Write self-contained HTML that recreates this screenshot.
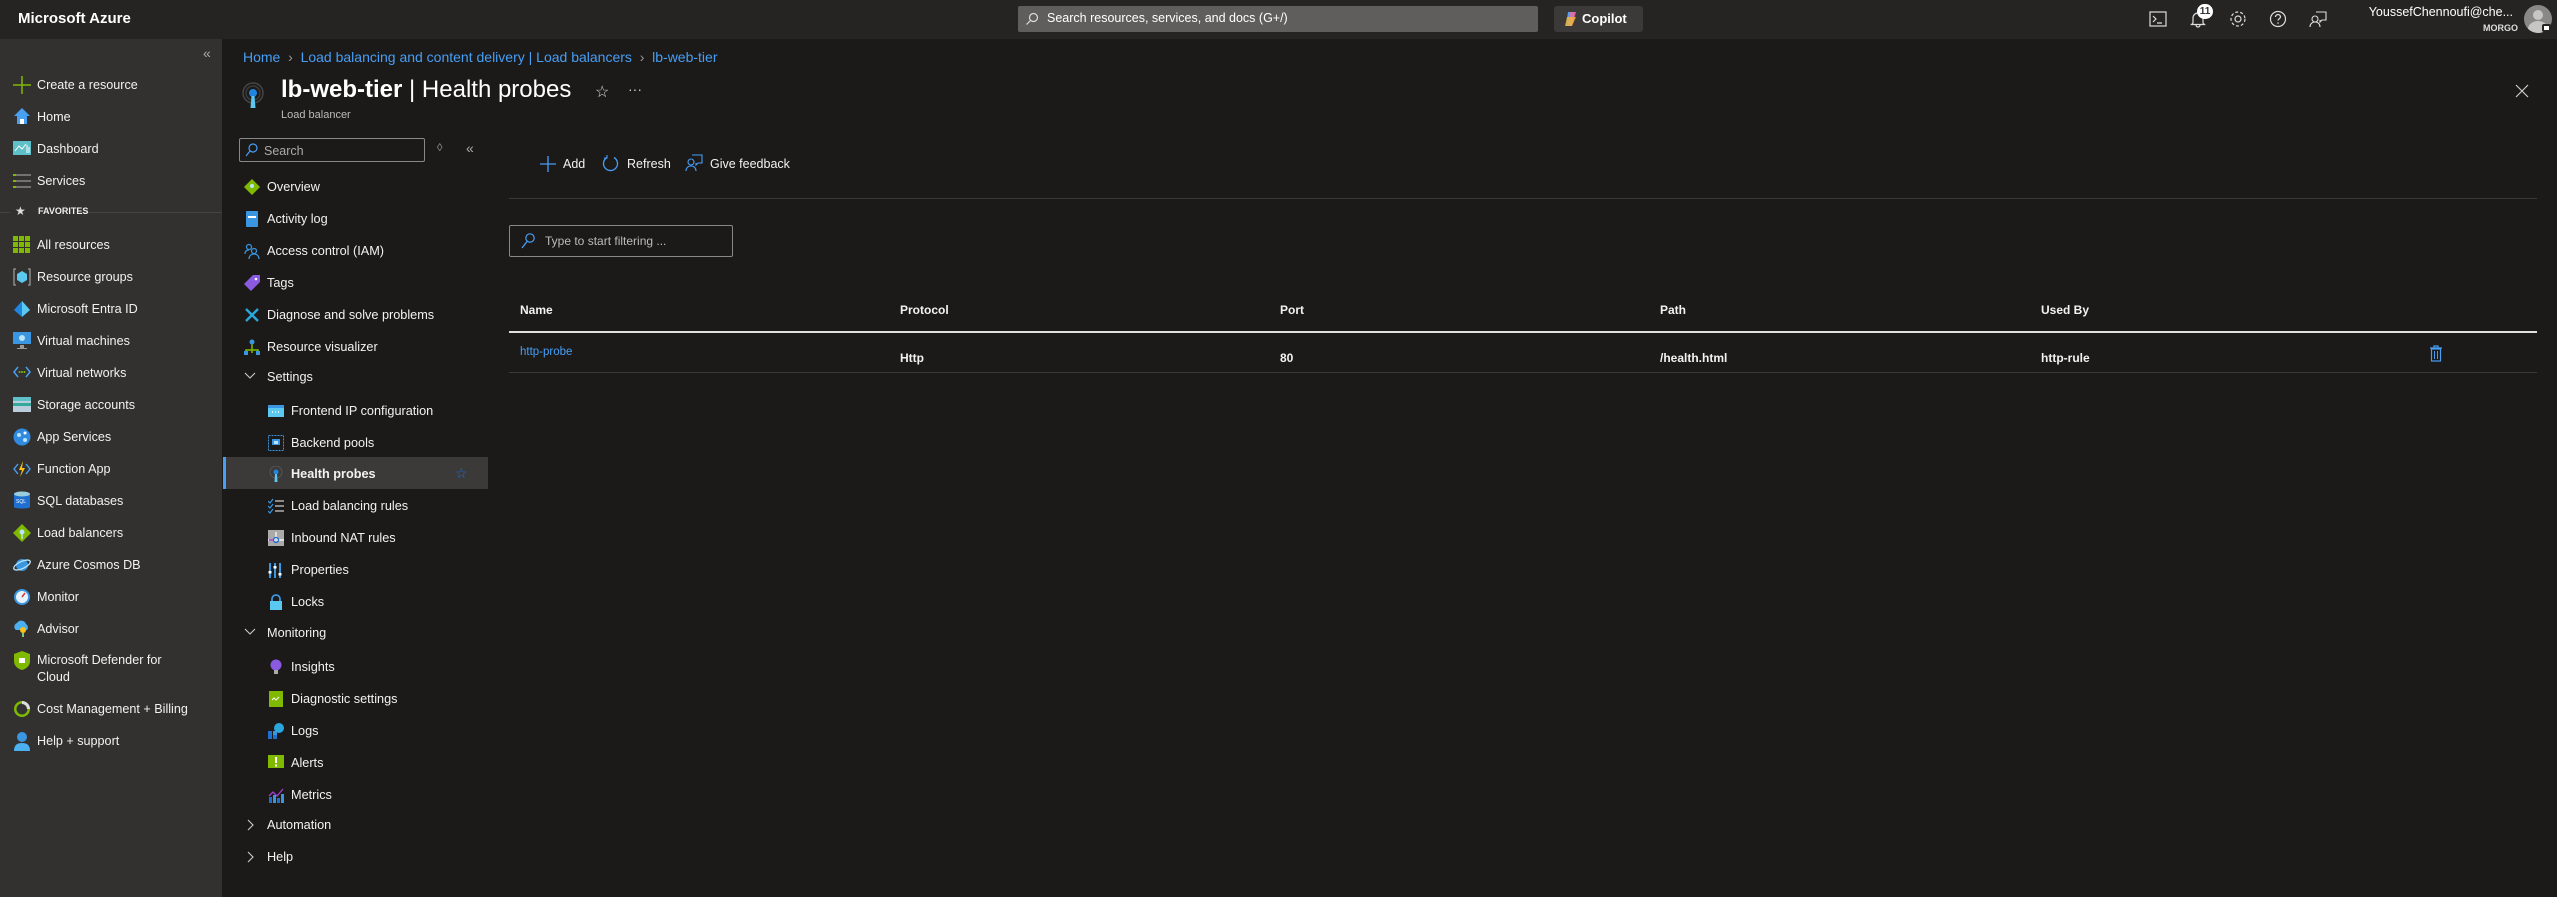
<!DOCTYPE html>
<html><head><meta charset="utf-8"><style>
*{box-sizing:border-box;margin:0;padding:0}
body{width:2557px;height:897px;background:#1b1a19;font-family:"Liberation Sans",sans-serif;color:#f3f2f1;position:relative;overflow:hidden;font-size:13px}
.a{position:absolute;white-space:nowrap}
#top{left:0;top:0;width:2557px;height:39px;background:#252423}
#side{left:0;top:39px;width:222px;height:858px;background:#323130}
.st{position:absolute;left:37px;font-size:12.6px;color:#f3f2f1;line-height:16px}
.mi{position:absolute;left:244px;width:16px;height:16px}
.mt{position:absolute;left:267px;font-size:12.7px;line-height:16px}
.si2{position:absolute;left:268px;width:16px;height:16px}
.mt2{position:absolute;left:291px;font-size:12.7px;line-height:16px}
.th{position:absolute;top:303px;font-size:12px;font-weight:bold;color:#f3f2f1}
.td{position:absolute;top:351px;font-size:12px;font-weight:bold;color:#f3f2f1}
</style></head><body>
<div class="a" id="top"></div>
<div class="a" style="left:18px;top:10px;font-size:15px;font-weight:bold;color:#fff">Microsoft Azure</div>
<div class="a" style="left:1018px;top:6px;width:520px;height:26px;background:#5f5e5c;border-radius:2px"></div>
<svg class="a" style="left:1025px;top:12px" width="14" height="14" viewBox="0 0 14 14"><circle cx="8.5" cy="5.5" r="4" fill="none" stroke="#ddd" stroke-width="1.2"/><path d="M5.5 8.5L1.5 12.5" stroke="#ddd" stroke-width="1.2"/></svg>
<div class="a" style="left:1047px;top:11px;font-size:12.5px;color:#fff">Search resources, services, and docs (G+/)</div>
<div class="a" style="left:1554px;top:6px;width:89px;height:26px;background:#3b3a39;border-radius:3px"></div>
<svg class="a" style="left:1564px;top:11px" width="14" height="16" viewBox="0 0 14 16"><path d="M4 1h6l-2 14H2z" fill="#4aa3f5"/><path d="M6 1h6l-4 14H5z" fill="#e56ea8" opacity=".9"/><path d="M3 6h9l-4 9H1z" fill="#f2b53a" opacity=".8"/></svg>
<div class="a" style="left:1582px;top:11px;font-size:13px;font-weight:bold;color:#fff">Copilot</div>
<svg class="a" style="left:2149px;top:11px" width="18" height="16" viewBox="0 0 18 16"><rect x="1" y="1" width="16" height="14" fill="none" stroke="#ddd" stroke-width="1.2"/><path d="M4 5l3 3-3 3M8 12h5" stroke="#ddd" fill="none" stroke-width="1.2"/></svg>
<svg class="a" style="left:2190px;top:10px" width="16" height="18" viewBox="0 0 16 18"><path d="M3 13V8a5 5 0 0110 0v5l1.5 1.5h-13z M6 15a2 2 0 004 0" fill="none" stroke="#ddd" stroke-width="1.2"/></svg>
<div class="a" style="left:2197px;top:4px;width:16px;height:15px;border-radius:8px;background:#fff;color:#333;font-size:10px;font-weight:bold;text-align:center;line-height:15px">11</div>
<svg class="a" style="left:2229px;top:10px" width="18" height="18" viewBox="0 0 18 18"><circle cx="9" cy="9" r="3" fill="none" stroke="#ddd" stroke-width="1.2"/><circle cx="9" cy="9" r="7" fill="none" stroke="#ddd" stroke-width="1.2" stroke-dasharray="3 2"/></svg>
<svg class="a" style="left:2269px;top:10px" width="18" height="18" viewBox="0 0 18 18"><circle cx="9" cy="9" r="7.5" fill="none" stroke="#ddd" stroke-width="1.2"/><path d="M6.5 7a2.5 2.5 0 115 0c0 1.5-2.5 2-2.5 3.5" fill="none" stroke="#ddd" stroke-width="1.2"/><circle cx="9" cy="13" r=".8" fill="#ddd"/></svg>
<svg class="a" style="left:2309px;top:10px" width="18" height="18" viewBox="0 0 18 18"><path d="M7 2h10v8h-4l-2 2v-2" fill="none" stroke="#ddd" stroke-width="1.1"/><circle cx="6" cy="9" r="3" fill="none" stroke="#ddd" stroke-width="1.1"/><path d="M1 17c0-3 2-5 5-5s5 2 5 5" fill="none" stroke="#ddd" stroke-width="1.1"/></svg>
<div class="a" style="right:44px;top:5px;font-size:12.5px;color:#fff">YoussefChennoufi@che...</div>
<div class="a" style="right:39px;top:23px;font-size:9px;font-weight:bold;color:#ddd">MORGO</div>
<div class="a" style="left:2524px;top:5px;width:28px;height:28px;border-radius:50%;background:#8a8886;overflow:hidden"><div style="position:absolute;left:9px;top:5px;width:10px;height:10px;border-radius:50%;background:#c8c6c4"></div><div style="position:absolute;left:4px;top:16px;width:20px;height:16px;border-radius:50%;background:#c8c6c4"></div></div>
<div class="a" style="left:2542px;top:24px;width:9px;height:8px;background:#fff;border-radius:2px;border:2px solid #252423"></div>

<div class="a" id="side"></div>
<div class="a" style="left:203px;top:45px;font-size:14px;color:#aaa">«</div>
<svg class="a" style="left:13px;top:76px" width="18" height="18"><path d="M9 0v18M0 9h18" stroke="#7fba00" stroke-width="1.5"/></svg><div class="a st" style="top:77px">Create a resource</div>
<svg class="a" style="left:13px;top:107px" width="18" height="18"><path d="M9 1L1 9h3v8h10V9h3z" fill="#4aa0f0"/><rect x="7" y="12" width="4" height="5" fill="#fff"/></svg><div class="a st" style="top:109px">Home</div>
<svg class="a" style="left:13px;top:141px" width="18" height="16"><rect width="18" height="14" fill="#5ec0c8"/><path d="M2 10l4-5 3 3 4-5M14 4v8M16 6v6" stroke="#fff" fill="none"/></svg><div class="a st" style="top:141px">Dashboard</div>
<svg class="a" style="left:13px;top:173px" width="18" height="16"><path d="M0 2h18M0 8h18M0 14h18" stroke="#999" stroke-width="1.2"/><path d="M0 2h3M0 8h3M0 14h3" stroke="#7fba00" stroke-width="2"/></svg><div class="a st" style="top:173px">Services</div>
<div class="a" style="left:0;top:212px;width:222px;height:1px;background:#444"></div>
<div class="a" style="left:10px;top:205px;width:70px;height:14px;background:#323130"></div>
<div class="a" style="left:15px;top:204px;font-size:12px;color:#ddd">★</div>
<div class="a" style="left:38px;top:206px;font-size:9px;font-weight:bold;color:#eee">FAVORITES</div>
<svg class="a" style="left:13px;top:236px" width="17" height="17"><g fill="#7fba00"><rect width="5" height="5"/><rect x="6" width="5" height="5"/><rect x="12" width="5" height="5"/><rect y="6" width="5" height="5"/><rect x="6" y="6" width="5" height="5"/><rect x="12" y="6" width="5" height="5"/><rect y="12" width="5" height="5"/><rect x="6" y="12" width="5" height="5"/><rect x="12" y="12" width="5" height="5"/></g></svg><div class="a st" style="top:237px">All resources</div>
<svg class="a" style="left:13px;top:268px" width="18" height="18"><path d="M3 1H1v16h2M15 1h2v16h-2" stroke="#999" fill="none" stroke-width="1.3"/><path d="M9 3l5 3v6l-5 3-5-3V6z" fill="#5ac8f0"/></svg><div class="a st" style="top:269px">Resource groups</div>
<svg class="a" style="left:13px;top:300px" width="18" height="18"><path d="M9 1L1 10l8 7 8-7z" fill="#1f85de"/><path d="M9 1l8 9-8 7z" fill="#5ac8f0"/></svg><div class="a st" style="top:301px">Microsoft Entra ID</div>
<svg class="a" style="left:13px;top:332px" width="18" height="18"><rect width="18" height="12" fill="#3a96e0"/><circle cx="9" cy="6" r="3" fill="#b8e5fa"/><path d="M7 13h4v3h3v1H4v-1h3z" fill="#999"/></svg><div class="a st" style="top:333px">Virtual machines</div>
<svg class="a" style="left:13px;top:365px" width="18" height="14"><path d="M5 2L1 7l4 5M13 2l4 5-4 5" stroke="#4aa0f0" fill="none" stroke-width="1.5"/><circle cx="6.5" cy="7" r="1" fill="#7fba00"/><circle cx="9" cy="7" r="1" fill="#7fba00"/><circle cx="11.5" cy="7" r="1" fill="#7fba00"/></svg><div class="a st" style="top:365px">Virtual networks</div>
<svg class="a" style="left:13px;top:397px" width="18" height="15"><rect width="18" height="15" fill="#bcd"/><rect y="0" width="18" height="4" fill="#5ec0c8"/><rect y="6" width="18" height="3" fill="#3a9"/></svg><div class="a st" style="top:397px">Storage accounts</div>
<svg class="a" style="left:13px;top:428px" width="18" height="18"><circle cx="9" cy="9" r="8.5" fill="#2f8ae0"/><circle cx="6" cy="7" r="2" fill="#b8e5fa"/><circle cx="12" cy="12" r="2" fill="#b8e5fa"/><circle cx="12" cy="5" r="1.5" fill="#fff"/></svg><div class="a st" style="top:429px">App Services</div>
<svg class="a" style="left:13px;top:460px" width="18" height="18"><path d="M5 4L1 9l4 5M13 4l4 5-4 5" stroke="#4aa0f0" fill="none" stroke-width="1.4"/><path d="M10 1L6 10h3l-2 7 5-9H9z" fill="#f9c11a"/></svg><div class="a st" style="top:461px">Function App</div>
<svg class="a" style="left:14px;top:491px" width="16" height="19"><path d="M0 3v13c0 2 16 2 16 0V3z" fill="#1f6fd1"/><ellipse cx="8" cy="3" rx="8" ry="2.5" fill="#9cd"/><text x="2" y="12" font-size="5" fill="#fff" font-family="Liberation Sans">SQL</text></svg><div class="a st" style="top:493px">SQL databases</div>
<svg class="a" style="left:13px;top:524px" width="18" height="18"><path d="M9 0l9 9-9 9-9-9z" fill="#7fba00"/><circle cx="9" cy="8" r="2.5" fill="#b8e5fa"/><path d="M9 10v5" stroke="#b8e5fa" stroke-width="1.5"/></svg><div class="a st" style="top:525px">Load balancers</div>
<svg class="a" style="left:13px;top:556px" width="18" height="18"><circle cx="9" cy="9" r="6" fill="#3a96e0"/><ellipse cx="9" cy="9" rx="9" ry="3.5" fill="none" stroke="#b8e5fa" stroke-width="1.3" transform="rotate(-25 9 9)"/></svg><div class="a st" style="top:557px">Azure Cosmos DB</div>
<svg class="a" style="left:13px;top:588px" width="18" height="18"><circle cx="9" cy="9" r="8" fill="#3a96e0"/><circle cx="9" cy="9" r="6" fill="#e8f4fc"/><path d="M9 9l3-4" stroke="#d33" stroke-width="1.5"/></svg><div class="a st" style="top:589px">Monitor</div>
<svg class="a" style="left:13px;top:620px" width="18" height="18"><path d="M3 10a4 4 0 011-7 5 5 0 019 1 4 4 0 011 6z" fill="#4ab0f0"/><circle cx="10" cy="10" r="3" fill="#f9c11a"/><path d="M9 13h2v4H9z" fill="#7c7"/></svg><div class="a st" style="top:621px">Advisor</div>
<svg class="a" style="left:14px;top:651px" width="16" height="19"><path d="M8 0l8 3v7c0 5-4 8-8 9-4-1-8-4-8-9V3z" fill="#7fba00"/><rect x="5" y="7" width="6" height="5" fill="#fff"/></svg><div class="a st" style="top:652px;line-height:17px">Microsoft Defender for<br>Cloud</div>
<svg class="a" style="left:13px;top:700px" width="18" height="18"><circle cx="9" cy="9" r="8" fill="#7fba00"/><circle cx="9" cy="9" r="5.5" fill="#333"/><path d="M9 1a8 8 0 018 8h-3a5 5 0 00-5-5z" fill="#ddd"/></svg><div class="a st" style="top:701px">Cost Management + Billing</div>
<svg class="a" style="left:13px;top:731px" width="18" height="20"><circle cx="9" cy="6" r="5" fill="#3a96e0"/><path d="M1 20c0-6 3-8 8-8s8 2 8 8z" fill="#4ab0f0"/></svg><div class="a st" style="top:733px">Help + support</div>

<div class="a" style="left:243px;top:49px;font-size:14px;color:#479ef5">Home &nbsp;<span style="color:#999">›</span>&nbsp; Load balancing and content delivery | Load balancers &nbsp;<span style="color:#999">›</span>&nbsp; lb-web-tier</div>
<svg class="a" style="left:242px;top:82px" width="22" height="28" viewBox="0 0 22 28"><circle cx="11" cy="11" r="10" fill="none" stroke="#444" stroke-width="1.5"/><circle cx="11" cy="11" r="7" fill="none" stroke="#3a3a3a" stroke-width="1.5"/><circle cx="11" cy="11" r="4" fill="#1f85de"/><path d="M9.5 14h3l1 12h-5z" fill="#5ac8f0"/></svg>
<div class="a" style="left:281px;top:76px;font-size:24px;color:#fff"><b>lb-web-tier</b> | Health probes</div>
<div class="a" style="left:281px;top:109px;font-size:11px;color:#bbb">Load balancer</div>
<div class="a" style="left:595px;top:82px;font-size:16px;color:#ddd">☆</div>
<div class="a" style="left:628px;top:81px;font-size:14px;color:#ccc">···</div>
<svg class="a" style="left:2515px;top:84px" width="14" height="14"><path d="M1 1l12 12M13 1L1 13" stroke="#ccc" stroke-width="1.2"/></svg>

<div class="a" style="left:239px;top:138px;width:186px;height:24px;border:1px solid #8a8886;border-radius:2px"></div>
<svg class="a" style="left:245px;top:143px" width="13" height="14"><circle cx="8" cy="5" r="4" fill="none" stroke="#479ef5" stroke-width="1.2"/><path d="M5 8l-4 5" stroke="#479ef5" stroke-width="1.2"/></svg>
<div class="a" style="left:264px;top:144px;font-size:12.5px;color:#aaa">Search</div>
<div class="a" style="left:437px;top:142px;font-size:11px;color:#999">◊</div>
<div class="a" style="left:466px;top:140px;font-size:14px;color:#aaa">«</div>

<svg class="mi a" style="top:179px" viewBox="0 0 16 16"><path d="M8 0l8 8-8 8-8-8z" fill="#7fba00"/><circle cx="8" cy="7" r="2" fill="#b8e5fa"/></svg><div class="a mt" style="top:179px">Overview</div>
<svg class="mi a" style="top:211px" viewBox="0 0 16 16"><rect x="2" y="0" width="12" height="16" rx="1" fill="#3a96e0"/><rect x="4" y="5" width="8" height="2" fill="#fff"/></svg><div class="a mt" style="top:211px">Activity log</div>
<svg class="mi a" style="top:243px" viewBox="0 0 16 16"><circle cx="5" cy="4" r="2.5" fill="none" stroke="#3a96e0" stroke-width="1.2"/><circle cx="10" cy="8" r="2.5" fill="none" stroke="#3a96e0" stroke-width="1.2"/><path d="M1 11c0-3 2-4 4-4M5 16c0-3 2-5 5-5s5 2 5 5" stroke="#3a96e0" fill="none" stroke-width="1.2"/></svg><div class="a mt" style="top:243px">Access control (IAM)</div>
<svg class="mi a" style="top:275px" viewBox="0 0 16 16"><path d="M9 0h7v7l-9 9-7-7z" fill="#8a5be0"/><circle cx="12" cy="4" r="1.3" fill="#fff"/></svg><div class="a mt" style="top:275px">Tags</div>
<svg class="mi a" style="top:307px" viewBox="0 0 16 16"><path d="M2 2l12 12M14 2L2 14" stroke="#2aa6dd" stroke-width="2.4"/></svg><div class="a mt" style="top:307px">Diagnose and solve problems</div>
<svg class="mi a" style="top:339px" viewBox="0 0 16 16"><path d="M8 2v7M2 14v-3h12v3M8 9v5" stroke="#7fba00" stroke-width="1.5" fill="none"/><circle cx="8" cy="3" r="2.5" fill="#3a96e0"/><rect x="0" y="12" width="4" height="4" fill="#3a96e0"/><rect x="12" y="12" width="4" height="4" fill="#3a96e0"/></svg><div class="a mt" style="top:339px">Resource visualizer</div>
<svg class="a" style="left:244px;top:372px" width="12" height="8"><path d="M1 1l5 5 5-5" stroke="#ccc" fill="none" stroke-width="1.1"/></svg><div class="a mt" style="top:369px">Settings</div>
<svg class="si2 a" style="top:403px" viewBox="0 0 16 16"><rect y="2" width="16" height="12" fill="#5ac8f0"/><rect y="2" width="16" height="3" fill="#3a96e0"/><path d="M4 9h1M7 9h1M10 9h1" stroke="#fff" stroke-width="1.5"/></svg><div class="a mt2" style="top:403px">Frontend IP configuration</div>
<svg class="si2 a" style="top:435px" viewBox="0 0 16 16"><rect x=".5" y=".5" width="15" height="15" fill="none" stroke="#3a96e0" stroke-dasharray="2 1"/><rect x="4" y="4" width="8" height="6" fill="#3a96e0"/><rect x="6" y="6" width="4" height="3" fill="#b8e5fa"/></svg><div class="a mt2" style="top:435px">Backend pools</div>
<div class="a" style="left:223px;top:457px;width:265px;height:32px;background:#3b3a39;border-left:3px solid #479ef5"></div>
<svg class="si2 a" style="top:466px" viewBox="0 0 16 16"><circle cx="8" cy="6" r="6" fill="none" stroke="#555"/><circle cx="8" cy="6" r="2.5" fill="#1f85de"/><path d="M7 8h2l.5 8h-3z" fill="#5ac8f0"/></svg><div class="a mt2" style="top:466px;font-weight:bold">Health probes</div>
<div class="a" style="left:455px;top:465px;font-size:14px;color:#1f6fd1">☆</div>
<svg class="si2 a" style="top:498px" viewBox="0 0 16 16"><path d="M7 3h9M7 8h9M7 13h9" stroke="#ccc" stroke-width="1.3"/><path d="M0 3l2 2 3-4M0 8l2 2 3-4M0 13l2 2 3-4" stroke="#3a96e0" fill="none" stroke-width="1.2"/></svg><div class="a mt2" style="top:498px">Load balancing rules</div>
<svg class="si2 a" style="top:530px" viewBox="0 0 16 16"><rect width="16" height="16" fill="#aaa"/><path d="M8 2v7M0 10h16" stroke="#fff" stroke-width="1.2"/><circle cx="8" cy="10" r="2.5" fill="none" stroke="#1f6fd1" stroke-width="1.3"/><path d="M1 10h4" stroke="#a33fd0" stroke-width="1.5"/></svg><div class="a mt2" style="top:530px">Inbound NAT rules</div>
<svg class="si2 a" style="top:562px" viewBox="0 0 16 16"><path d="M2 1v15M7 1v15M12 1v15" stroke="#3a96e0" stroke-width="2"/><rect x="0.5" y="9" width="3" height="2.5" fill="#fff"/><rect x="5.5" y="4" width="3" height="2.5" fill="#fff"/><rect x="10.5" y="11" width="3" height="2.5" fill="#fff"/></svg><div class="a mt2" style="top:562px">Properties</div>
<svg class="si2 a" style="top:594px" viewBox="0 0 16 16"><path d="M4 7V5a4 4 0 018 0v2" stroke="#3a96e0" fill="none" stroke-width="1.8"/><rect x="2" y="7" width="12" height="9" fill="#5ac8f0"/></svg><div class="a mt2" style="top:594px">Locks</div>
<svg class="a" style="left:244px;top:628px" width="12" height="8"><path d="M1 1l5 5 5-5" stroke="#ccc" fill="none" stroke-width="1.1"/></svg><div class="a mt" style="top:625px">Monitoring</div>
<svg class="si2 a" style="top:659px" viewBox="0 0 16 16"><circle cx="8" cy="6" r="5.5" fill="#8a5be0"/><rect x="6" y="11" width="4" height="4" fill="#aaa"/></svg><div class="a mt2" style="top:659px">Insights</div>
<svg class="si2 a" style="top:691px" viewBox="0 0 16 16"><rect x="1" width="14" height="16" fill="#7fba00"/><path d="M4 9l2-2 2 2 3-3" stroke="#fff" fill="none"/></svg><div class="a mt2" style="top:691px">Diagnostic settings</div>
<svg class="si2 a" style="top:723px" viewBox="0 0 16 16"><circle cx="11" cy="5" r="5" fill="#2aa6dd"/><rect x="0" y="8" width="4" height="4" fill="#1f6fd1"/><rect x="0" y="12" width="4" height="4" fill="#1f6fd1"/><rect x="5" y="8" width="4" height="4" fill="#3a96e0"/><rect x="5" y="12" width="4" height="4" fill="#1f6fd1"/></svg><div class="a mt2" style="top:723px">Logs</div>
<svg class="si2 a" style="top:755px" viewBox="0 0 16 16"><rect width="16" height="13" fill="#7fba00"/><path d="M8 2v6M8 9.5v2" stroke="#fff" stroke-width="2"/></svg><div class="a mt2" style="top:755px">Alerts</div>
<svg class="si2 a" style="top:787px" viewBox="0 0 16 16"><path d="M1 9l4-4 4 4 6-7" stroke="#a33fd0" fill="none" stroke-width="1.3"/><rect x="1" y="10" width="3" height="6" fill="#1f6fd1"/><rect x="5" y="8" width="3" height="8" fill="#3a96e0"/><rect x="9" y="11" width="3" height="5" fill="#1f6fd1"/><rect x="13" y="7" width="3" height="9" fill="#3a96e0"/></svg><div class="a mt2" style="top:787px">Metrics</div>
<svg class="a" style="left:247px;top:819px" width="8" height="12"><path d="M1 1l5 5-5 5" stroke="#ccc" fill="none" stroke-width="1.1"/></svg><div class="a mt" style="top:817px">Automation</div>
<svg class="a" style="left:247px;top:851px" width="8" height="12"><path d="M1 1l5 5-5 5" stroke="#ccc" fill="none" stroke-width="1.1"/></svg><div class="a mt" style="top:849px">Help</div>

<svg class="a" style="left:540px;top:156px" width="16" height="16"><path d="M8 0v16M0 8h16" stroke="#479ef5" stroke-width="1.3"/></svg>
<div class="a" style="left:563px;top:157px;font-size:12.5px">Add</div>
<svg class="a" style="left:602px;top:155px" width="17" height="17"><path d="M12 2.5A7 7 0 1 1 5 2.5" stroke="#479ef5" fill="none" stroke-width="1.3"/><path d="M5 0v3H2" stroke="#479ef5" fill="none" stroke-width="1.1"/></svg>
<div class="a" style="left:627px;top:157px;font-size:12.5px">Refresh</div>
<svg class="a" style="left:685px;top:154px" width="18" height="18"><path d="M7 1h10v8h-4l-2 2v-2" fill="none" stroke="#479ef5" stroke-width="1.1"/><circle cx="6" cy="8" r="3" fill="none" stroke="#479ef5" stroke-width="1.1"/><path d="M1 17c0-3 2-5 5-5s5 2 5 5" fill="none" stroke="#479ef5" stroke-width="1.1"/></svg>
<div class="a" style="left:710px;top:157px;font-size:12.5px">Give feedback</div>
<div class="a" style="left:509px;top:198px;width:2028px;height:1px;background:#3b3a39"></div>
<div class="a" style="left:509px;top:225px;width:224px;height:32px;border:1px solid #8a8886;border-radius:2px"></div>
<svg class="a" style="left:521px;top:233px" width="14" height="16"><circle cx="9" cy="5" r="4.2" fill="none" stroke="#479ef5" stroke-width="1.2"/><path d="M6 8.5L1 15" stroke="#479ef5" stroke-width="1.3"/></svg>
<div class="a" style="left:545px;top:234px;font-size:12px;color:#bbb">Type to start filtering ...</div>
<div class="th" style="left:520px">Name</div>
<div class="th" style="left:900px">Protocol</div>
<div class="th" style="left:1280px">Port</div>
<div class="th" style="left:1660px">Path</div>
<div class="th" style="left:2041px">Used By</div>
<div class="a" style="left:509px;top:331px;width:2028px;height:2px;background:#e1dfdd"></div>
<div class="a" style="left:520px;top:346px;font-size:11.5px;color:#479ef5">http-probe</div>
<div class="td" style="left:900px">Http</div>
<div class="td" style="left:1280px">80</div>
<div class="td" style="left:1660px">/health.html</div>
<div class="td" style="left:2041px">http-rule</div>
<svg class="a" style="left:2429px;top:345px" width="14" height="17"><path d="M1 3h12M5 3V1h4v2" stroke="#479ef5" fill="none" stroke-width="1.2"/><rect x="2.5" y="4" width="9" height="12" fill="none" stroke="#479ef5" stroke-width="1.2"/><path d="M5.5 6v8M8.5 6v8" stroke="#479ef5"/></svg>
<div class="a" style="left:509px;top:372px;width:2028px;height:1px;background:#3b3a39"></div>
</body></html>
